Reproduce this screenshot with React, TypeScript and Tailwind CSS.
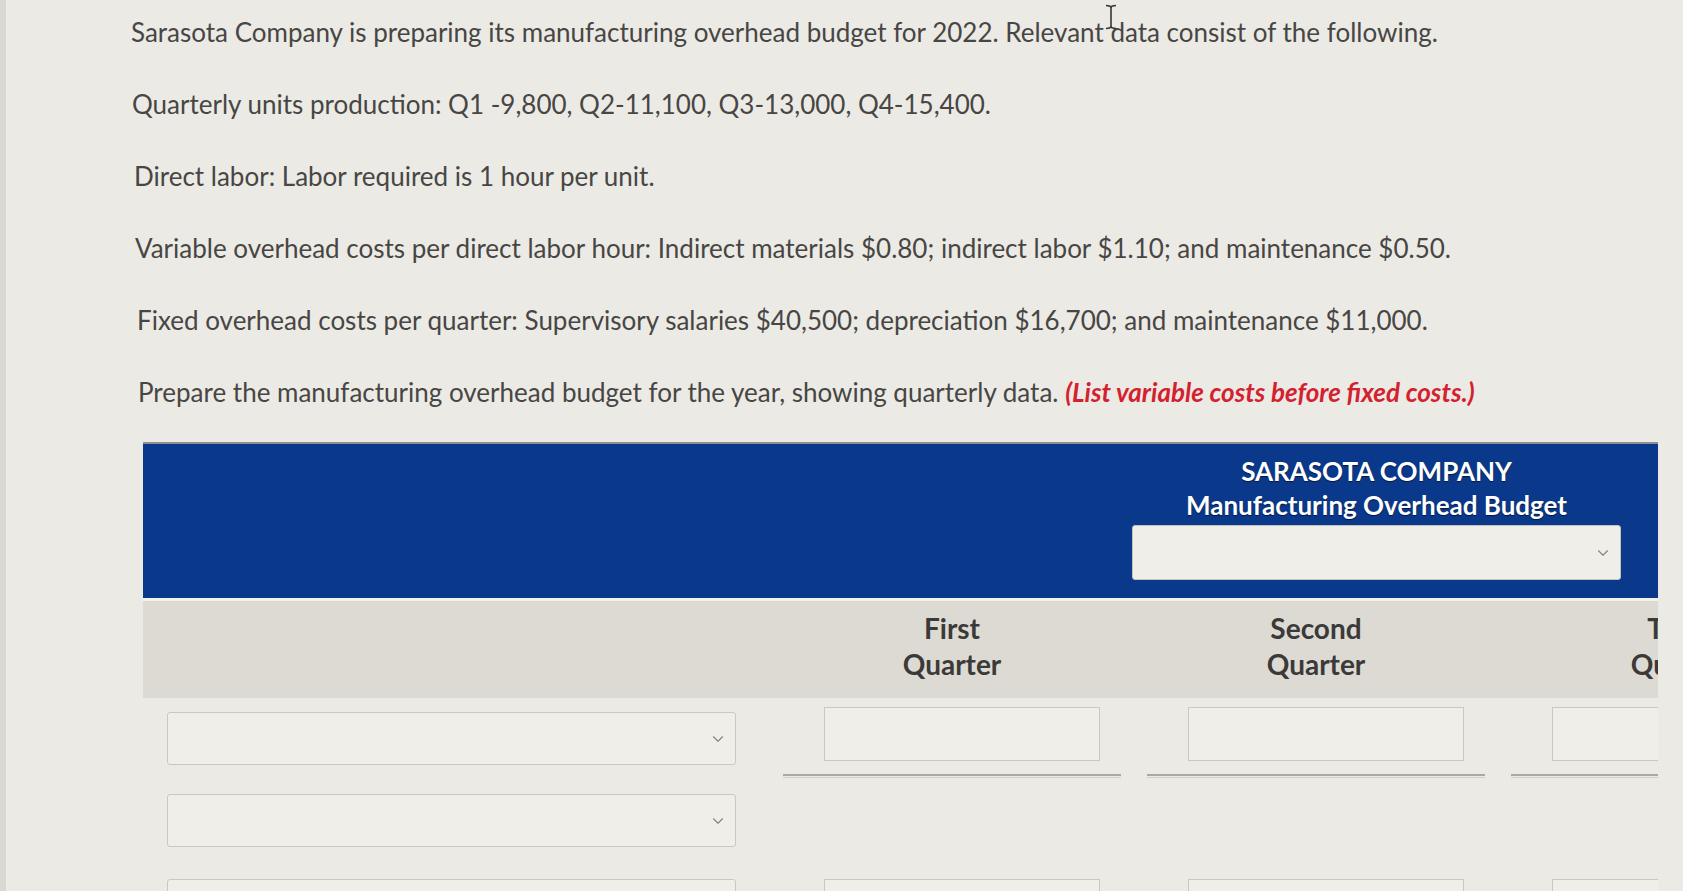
import React from 'react'
import { ChevronDown } from 'lucide-react'

const Select = ({ className = '' }: { className?: string }) => (
  <div className={`relative h-[53px] border border-[#c9c8c1] rounded-[3px] bg-[#efeee8] ${className}`}>
    <ChevronDown className="absolute right-[8px] top-1/2 -translate-y-1/2 w-[18px] h-[18px] text-[#85847f]" strokeWidth={1.5} />
  </div>
)

const Cell = ({ underline = true }: { underline?: boolean }) => (
  <div className="w-[364px] shrink-0">
    <div className="ml-[54px] w-[276px] h-[54px] border border-[#c9c8c1] bg-[#efeee8]" />
    {underline && <div className="mt-[13px] mx-[13px] h-[4px] border-t-2 border-[#a9a8a2] border-b border-b-[#cfcec8]" />}
  </div>
)

const App = () => {
  return (
    <div className="relative w-[1683px] h-[891px] overflow-hidden bg-[#eceae4] text-[#474645]" style={{ fontFamily: 'Lato, "Open Sans", sans-serif' }}>
      {/* left bezel */}
      <div className="absolute left-0 top-0 bottom-0 w-[6px] bg-[#d9d8d1]" />

      {/* text cursor */}
      <svg className="absolute left-[1104px] top-[4px]" width="14" height="26" viewBox="0 0 14 26">
        <path d="M2 1.5 Q7 1.5 7 4 Q7 1.5 12 1.5 M7 4 V22 M2 24.5 Q7 24.5 7 22 Q7 24.5 12 24.5" stroke="#3a3634" strokeWidth="1.6" fill="none" />
      </svg>

      {/* Problem text */}
      <div className="pl-[131px] pt-[14px] text-[26px] leading-[36px] flex flex-col gap-[36px]">
        <p>Sarasota Company is preparing its manufacturing overhead budget for 2022. Relevant data consist of the following.</p>
        <p className="pl-[1px]">Quarterly units production: Q1 -9,800, Q2-11,100, Q3-13,000, Q4-15,400.</p>
        <p className="pl-[3px]">Direct labor: Labor required is 1 hour per unit.</p>
        <p className="pl-[4px]">Variable overhead costs per direct labor hour: Indirect materials $0.80; indirect labor $1.10; and maintenance $0.50.</p>
        <p className="pl-[6px]">Fixed overhead costs per quarter: Supervisory salaries $40,500; depreciation $16,700; and maintenance $11,000.</p>
        <p className="pl-[7px]">
          Prepare the manufacturing overhead budget for the year, showing quarterly data.{' '}
          <span className="text-[#d4212f] font-bold italic">(List variable costs before fixed costs.)</span>
        </p>
      </div>

      {/* Budget table */}
      <div className="ml-[143px] mt-[32px] w-[1515px] overflow-hidden">
        <div className="h-[2px] bg-[#8d8f95]" />
        <div className="h-[154px] bg-[#0a398c] flex justify-end pr-[37px] pt-[10px]">
          <div className="w-[489px] flex flex-col items-center">
            <div className="text-white font-bold text-[26px] leading-[34px] [text-shadow:0_1px_1px_rgba(0,0,0,0.6)]">SARASOTA COMPANY</div>
            <div className="text-white font-bold text-[26px] leading-[34px] [text-shadow:0_1px_1px_rgba(0,0,0,0.6)]">Manufacturing Overhead Budget</div>
            <div className="relative mt-[3px] w-full h-[55px] bg-[#efeee9] rounded-[3px] border border-[#c4c3bd]">
              <ChevronDown className="absolute right-[8px] top-1/2 -translate-y-1/2 w-[18px] h-[18px] text-[#85847f]" strokeWidth={1.5} />
            </div>
          </div>
        </div>
        <div className="h-[3px] bg-[#f2f1ec]" />
        <div className="h-[97px] bg-[#dcdad3] flex">
          <div className="w-[627px] shrink-0" />
          {['First', 'Second', 'Third', 'Fourth'].map(q => (
            <div key={q} className="w-[364px] shrink-0 flex flex-col items-center pt-[9px] text-[28px] leading-[36px] font-bold text-[#3b3a39]">
              <span>{q}</span>
              <span>Quarter</span>
            </div>
          ))}
        </div>

        {/* Row 1 */}
        <div className="flex pt-[9px]">
          <div className="w-[627px] shrink-0 pl-[24px] pt-[5px]">
            <Select className="w-[569px]" />
          </div>
          <Cell />
          <Cell />
          <Cell />
          <Cell />
        </div>

        {/* Row 2 */}
        <div className="flex mt-[16px]">
          <div className="w-[627px] shrink-0 pl-[24px]">
            <Select className="w-[569px]" />
          </div>
        </div>

        {/* Row 3 */}
        <div className="flex mt-[32px]">
          <div className="w-[627px] shrink-0 pl-[24px]">
            <Select className="w-[569px]" />
          </div>
          <Cell />
          <Cell />
          <Cell />
          <Cell />
        </div>
      </div>
    </div>
  )
}

export default App
